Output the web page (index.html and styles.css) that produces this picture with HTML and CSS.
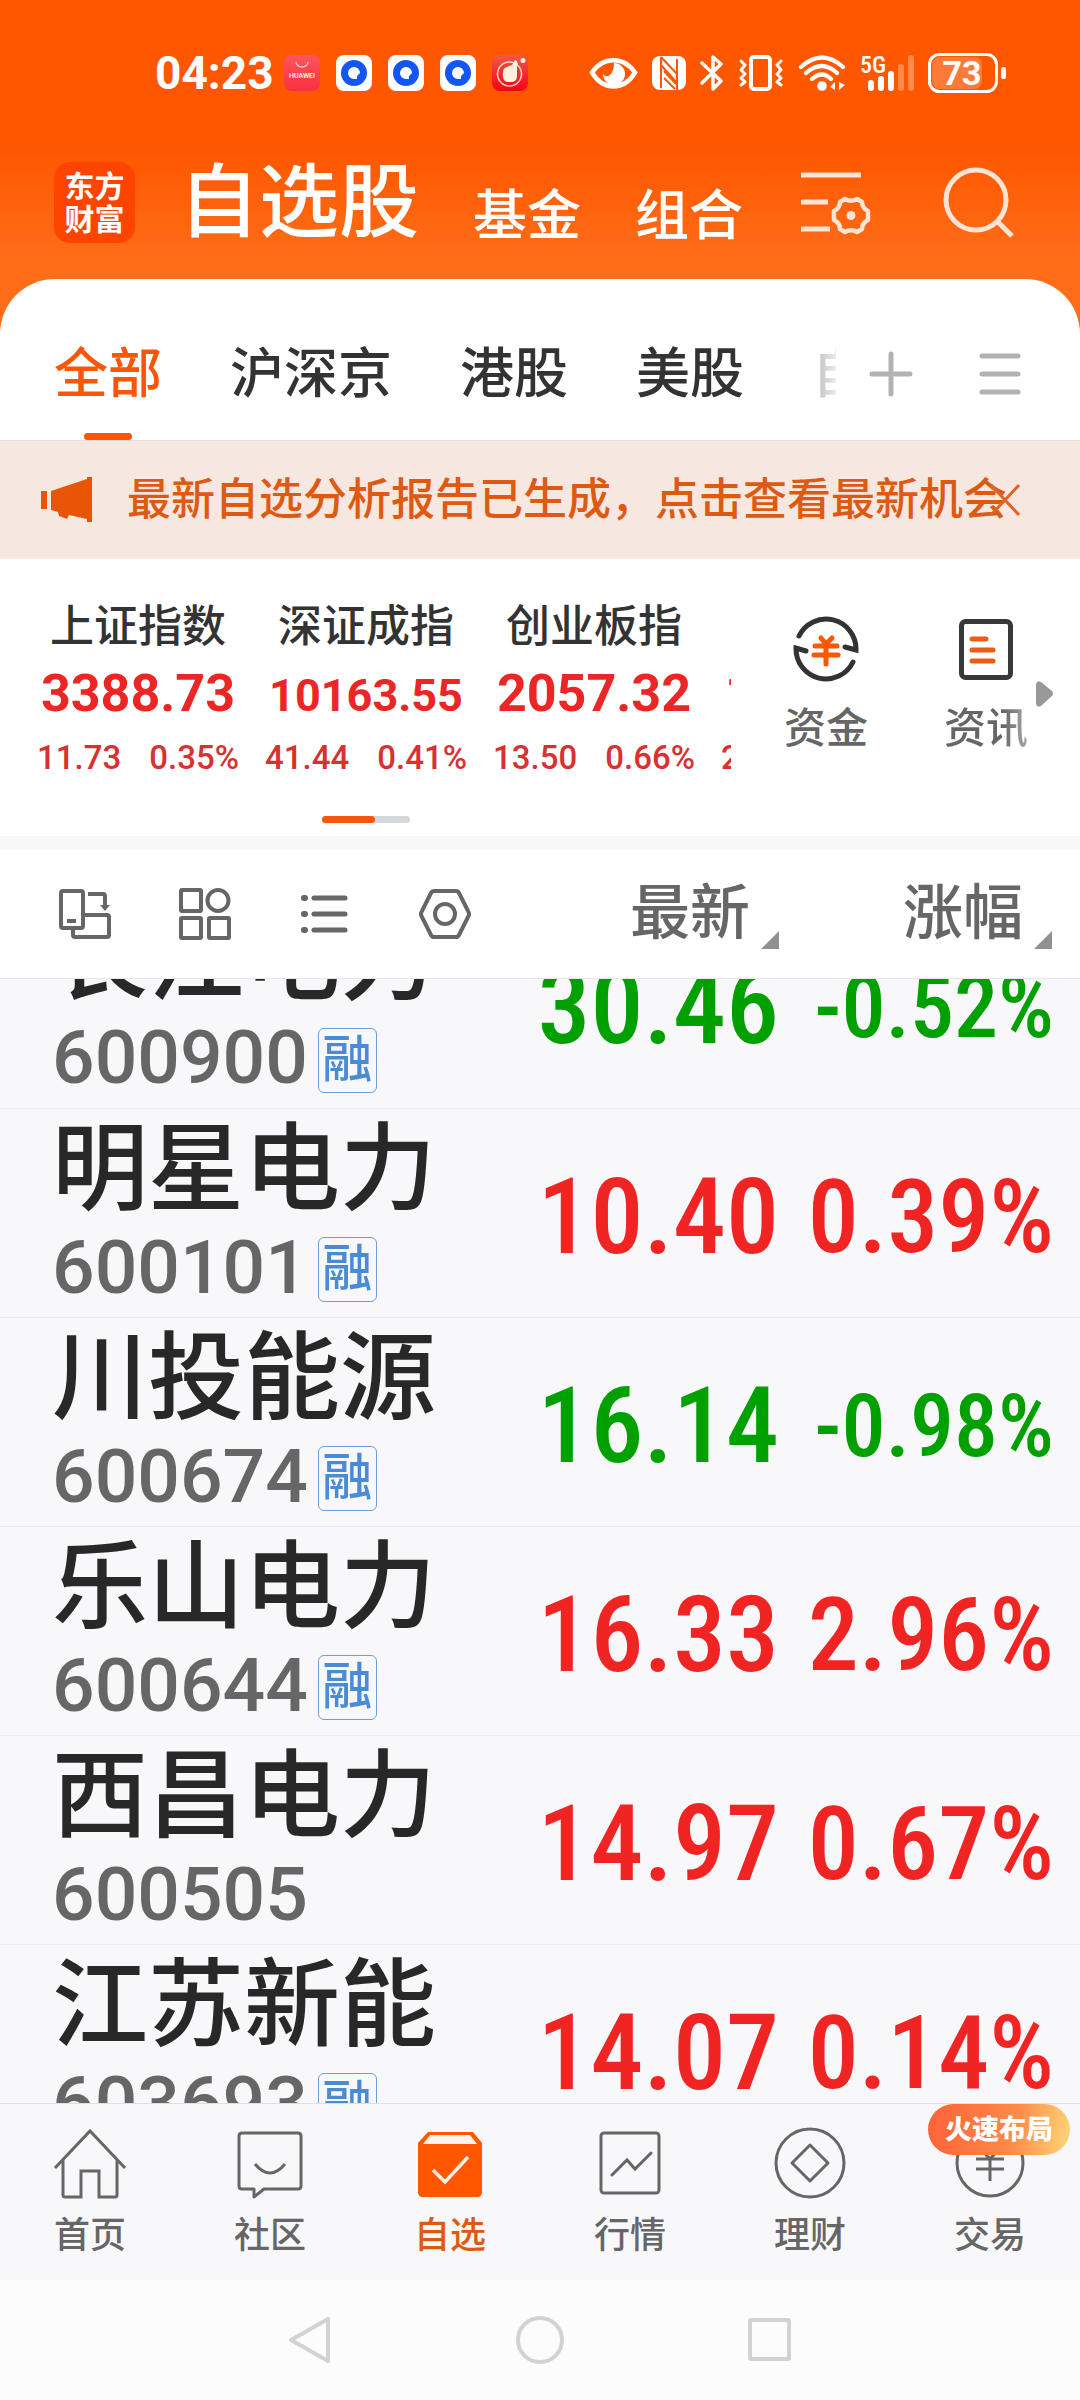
FILE: index.html
```
<!DOCTYPE html>
<html lang="zh-CN">
<head>
    <meta charset="UTF-8">
    <meta name="viewport" content="width=device-width, initial-scale=1.0">
    <title>自选股</title>
    <link rel="stylesheet" href="styles.css">
</head>
<body>
    <!-- Status bar -->
    <div class="status">
        <span class="time">04:23</span>
        <div class="notifications">
            <svg width="36" height="36" viewBox="0 0 36 36"><defs><linearGradient id="hw" x1="0" y1="0" x2="0" y2="1"><stop offset="0" stop-color="#ff5560"/><stop offset="1" stop-color="#f8303f"/></linearGradient></defs><rect width="36" height="36" rx="8" fill="url(#hw)"/><path d="M12 7a6 5 0 0 0 12 0" fill="none" stroke="#ffd0d0" stroke-width="1.3"/><text x="18" y="23" text-anchor="middle" font-size="7" class="tiny">HUAWEI</text></svg>
            <svg width="36" height="36" viewBox="0 0 36 36"><rect width="36" height="36" rx="8" fill="#fff"/><circle cx="18" cy="18" r="13" fill="#1456f5"/><path d="M18 12a6 6 0 1 0 0 12l3 0v-3l3-3a6 6 0 0 0-6-6z" fill="#fff"/></svg>
            <svg width="36" height="36" viewBox="0 0 36 36"><rect width="36" height="36" rx="8" fill="#fff"/><circle cx="18" cy="18" r="13" fill="#1456f5"/><path d="M18 12a6 6 0 1 0 0 12l3 0v-3l3-3a6 6 0 0 0-6-6z" fill="#fff"/></svg>
            <svg width="36" height="36" viewBox="0 0 36 36"><rect width="36" height="36" rx="8" fill="#fff"/><circle cx="18" cy="18" r="13" fill="#1456f5"/><path d="M18 12a6 6 0 1 0 0 12l3 0v-3l3-3a6 6 0 0 0-6-6z" fill="#fff"/></svg>
            <svg width="36" height="36" viewBox="0 0 36 36"><defs><linearGradient id="tb" x1="0" y1="0" x2="0" y2="1"><stop offset="0" stop-color="#ee5a48"/><stop offset="1" stop-color="#fb0014"/></linearGradient></defs><rect width="36" height="36" rx="8" fill="url(#tb)"/><circle cx="17.500" cy="19" r="12" fill="none" stroke="#ffd9c8" stroke-width="1.500"/><path d="M11 17q0-4 4-5l5-2 3-5q4 1 2 7v9q0 6-6 6h-4q-5-1-4-10z" fill="#fff0e2"/><circle cx="31" cy="5.500" r="2.500" fill="#ffe5dc"/></svg>
        </div>
        <div class="system">
            <svg width="49" height="36" viewBox="0 0 49 36"><path d="M3 17.500C14 1 35 1 46 17.500C35 36 14 36 3 17.500z" fill="none" stroke="#fff" stroke-width="4.500"/><path d="M25 8a11 11 0 1 1-11 11q3 4 7 1q4-4 4-12z" fill="#fff"/></svg>
            <svg width="34" height="36" viewBox="0 0 34 36"><rect x="0" y="1" width="34" height="34" rx="8" fill="#fff"/><path d="M9 2v31M25 4v31" stroke="#ff5600" stroke-width="2"/><path d="M9 2l16 17v9L9 10M12 23l11 11M12 16l12 13" stroke="#ff5600" stroke-width="2" fill="none"/></svg>
            <svg width="24" height="36" viewBox="0 0 24 36"><path d="M2 8l19 18-8 8V2l8 7L2 28" fill="none" stroke="#fff" stroke-width="3.500" stroke-linejoin="round" stroke-linecap="round"/></svg>
            <svg width="46" height="36" viewBox="0 0 46 36"><rect x="13" y="2" width="19" height="32" rx="3" fill="none" stroke="#fff" stroke-width="4"/><path d="M3 6l4 4-4 5 4 4-4 4 4 4-4 3M43 6l-4 4 4 5-4 4 4 4-4 4 4 3" fill="none" stroke="#fff" stroke-width="3" stroke-linecap="round" stroke-linejoin="round"/></svg>
            <svg width="48" height="36" viewBox="0 0 48 36"><g fill="none" stroke="#fff" stroke-width="4.200" stroke-linecap="round"><path d="M3 12q21-19 42 0M8 18q16-14 31 0M14 24q10-9 19 0"/></g><circle cx="24" cy="31" r="4.800" fill="#fff"/><path d="M37 27v8l-5-3zM41 27v8l6-5z" fill="#fff"/></svg>
            <svg width="54" height="38" viewBox="0 0 54 38"><text x="0" y="19" font-size="24" class="net">5G</text><g fill="#fff"><rect x="8" y="26" width="6" height="11" rx="3"/><rect x="18" y="22" width="6" height="15" rx="3"/><rect x="28" y="17" width="6" height="20" rx="3"/></g><g fill="#ff8a4c"><rect x="38" y="10" width="6" height="27" rx="3"/><rect x="48" y="1" width="6" height="36" rx="3"/></g></svg>
            <svg width="78" height="40" viewBox="0 0 78 40"><rect x="4" y="4" width="50" height="32" rx="8" fill="#ff7a38"/><rect x="1.500" y="1.500" width="67" height="37" rx="10" fill="none" stroke="#fff" stroke-width="3"/><rect x="73" y="14" width="5" height="12" rx="2" fill="#fff"/><text x="34" y="32" text-anchor="middle" font-size="34" class="level">73</text></svg>
        </div>
    </div>

    <header class="header">
        <div class="logo"><span>东方</span><span>财富</span></div>
        <nav class="sections">
            <a href="#" class="current">自选股</a>
            <a href="#">基金</a>
            <a href="#">组合</a>
        </nav>
        <button class="icon-btn" aria-label="设置">
            <svg width="70" height="64" viewBox="0 0 70 64" fill="none" stroke="#ffe3d3" stroke-width="5"><path d="M0 4h60M0 31h27M0 58h29"/><path d="M44 28q6 3.500 12 0l5 3q0 6 6 9v9q-6 3-6 9l-5 3q-6-3.500-12 0l-5-3q0-6-6-9v-9q6-3 6-9z" stroke-width="4.500" stroke-linejoin="round"/><circle cx="50" cy="44.500" r="4.500" fill="#ffe3d3" stroke="none"/></svg>
        </button>
        <button class="icon-btn search" aria-label="搜索">
            <svg width="72" height="72" viewBox="0 0 72 72" fill="none" stroke="#ffe3d3" stroke-width="5"><circle cx="33" cy="33" r="30"/><path d="M54 54l15 15"/></svg>
        </button>
    </header>

    <main class="sheet">
        <div class="groups">
            <div class="group-list">
                <button class="group active">全部</button>
                <button class="group">沪深京</button>
                <button class="group">港股</button>
                <button class="group">美股</button>
                <button class="group">自选</button>
            </div>
            <button class="icon-btn" aria-label="添加"><svg width="44" height="46" viewBox="0 0 44 46"><path d="M22 3v40M3 23h38" stroke="#b2b2b2" stroke-width="5" stroke-linecap="round"/></svg></button>
            <button class="icon-btn" aria-label="菜单"><svg width="42" height="46" viewBox="0 0 42 46"><path d="M3 5h36M3 23h36M3 41h36" stroke="#b2b2b2" stroke-width="5" stroke-linecap="round"/></svg></button>
        </div>

        <div class="notice">
            <svg width="52" height="46" viewBox="0 0 52 46"><path d="M0 14h6v18H0zM10 14l36-12V0h5v45h-5v-3l-18-4-2 4-8-3-1-4-7-2z" fill="#e95504"/></svg>
            <a href="#">最新自选分析报告已生成，点击查看最新机会</a>
            <button class="icon-btn close" aria-label="关闭"><svg width="32" height="34" viewBox="0 0 32 34"><path d="M2 2l28 30M30 2L2 32" stroke="#dd6524" stroke-width="3"/></svg></button>
        </div>

        <section class="market">
            <div class="indices">
                <div class="index"><span class="index-name">上证指数</span><b class="index-value">3388.73</b><span class="index-change"><span>11.73</span><span>0.35%</span></span></div>
                <div class="index"><span class="index-name">深证成指</span><b class="index-value long">10163.55</b><span class="index-change"><span>41.44</span><span>0.41%</span></span></div>
                <div class="index"><span class="index-name">创业板指</span><b class="index-value">2057.32</b><span class="index-change"><span>13.50</span><span>0.66%</span></span></div>
                <div class="index"><span class="index-name">科创50</span><b class="index-value">1006.32</b><span class="index-change"><span>2.50</span><span>0.25%</span></span></div>
            </div>
            <div class="shortcuts">
                <a href="#" class="shortcut">
                    <svg width="66" height="68" viewBox="0 0 66 68" fill="none" stroke="#333" stroke-width="5" stroke-linecap="round"><path d="M6 21A30 30 0 0 1 63 35L52 32M60 47A30 30 0 0 1 3 33L13 36"/><path d="M28 23l5 6 6-6M22 31h22M21 40h24M33 29v20" stroke="#ff5600"/></svg>
                    <span>资金</span>
                </a>
                <a href="#" class="shortcut">
                    <svg width="54" height="68" viewBox="0 0 54 68" fill="none" stroke="#383838" stroke-width="5" stroke-linecap="round"><rect x="2.500" y="6.500" width="49" height="56" rx="4"/><path d="M13 24h14M13 35h21M13 46h21" stroke="#eb5d14"/></svg>
                    <span class="fade">资讯</span>
                </a>
            </div>
            <svg class="more" width="18" height="28" viewBox="0 0 18 28"><path d="M0 4q1-4 5-2l11 9q2 3 0 5L5 26q-4 2-5-2z" fill="#999"/></svg>
            <div class="pager"><i></i></div>
        </section>

        <div class="toolbar">
            <div class="tools">
                <button class="icon-btn" aria-label="横屏"><svg width="52" height="52" viewBox="0 0 52 52" fill="none" stroke="#666" stroke-width="4"><rect x="2" y="3" width="22" height="37" rx="2"/><path d="M8 33h9M14 41v6q0 2 2 2h32q2 0 2-2V29q0-2-2-2H25M29 6h15q2 0 2 2v11"/><path d="M41 17h10l-5 6z" fill="#666" stroke="none"/></svg></button>
                <button class="icon-btn" aria-label="宫格"><svg width="52" height="52" viewBox="0 0 52 52" fill="none" stroke="#666" stroke-width="4"><rect x="2" y="2" width="20" height="21" rx="1"/><circle cx="39" cy="12.500" r="10.500"/><rect x="2" y="30" width="20" height="20" rx="1"/><rect x="30" y="30" width="20" height="20" rx="1"/></svg></button>
                <button class="icon-btn" aria-label="列表"><svg width="52" height="52" viewBox="0 0 52 52" stroke="#666" stroke-width="5" stroke-linecap="round"><path d="M15 10h31M15 26h31M15 42h31"/><path d="M5 10h1M5 26h1M5 42h1" stroke-width="6"/></svg></button>
                <button class="icon-btn" aria-label="更多设置"><svg width="52" height="52" viewBox="0 0 52 52" fill="none" stroke="#666" stroke-width="4"><path d="M15 3h22q2 0 3 2l9 18q2 3 0 6l-9 18q-1 2-3 2H15q-2 0-3-2L3 29q-2-3 0-6L12 5q1-2 3-2z"/><circle cx="26" cy="26" r="10"/></svg></button>
            </div>
            <button class="sort">最新<svg width="18" height="18" viewBox="0 0 18 18"><path d="M18 0v18H0z" fill="#8f8f94"/></svg></button>
            <button class="sort">涨幅<svg width="18" height="18" viewBox="0 0 18 18"><path d="M18 0v18H0z" fill="#8f8f94"/></svg></button>
        </div>

        <div class="scroller">
            <table class="stocks">
                <tr class="down">
                    <td class="stock"><div class="name">长江电力</div><div class="code">600900<span class="tag">融</span></div></td>
                    <td class="price">30.46</td>
                    <td class="percent">-0.52%</td>
                </tr>
                <tr class="up">
                    <td class="stock"><div class="name">明星电力</div><div class="code">600101<span class="tag">融</span></div></td>
                    <td class="price">10.40</td>
                    <td class="percent">0.39%</td>
                </tr>
                <tr class="down">
                    <td class="stock"><div class="name">川投能源</div><div class="code">600674<span class="tag">融</span></div></td>
                    <td class="price">16.14</td>
                    <td class="percent">-0.98%</td>
                </tr>
                <tr class="up">
                    <td class="stock"><div class="name">乐山电力</div><div class="code">600644<span class="tag">融</span></div></td>
                    <td class="price">16.33</td>
                    <td class="percent">2.96%</td>
                </tr>
                <tr class="up">
                    <td class="stock"><div class="name">西昌电力</div><div class="code">600505</div></td>
                    <td class="price">14.97</td>
                    <td class="percent">0.67%</td>
                </tr>
                <tr class="up">
                    <td class="stock"><div class="name">江苏新能</div><div class="code">603693<span class="tag">融</span></div></td>
                    <td class="price">14.07</td>
                    <td class="percent">0.14%</td>
                </tr>
            </table>
        </div>
    </main>

    <nav class="tabbar">
        <a href="#"><svg width="74" height="74" viewBox="0 0 74 74" fill="none" stroke="#666" stroke-width="3"><path d="M2 41L37 4l35 37M10 33v35q0 2 2 2h16V44h18v26h16q2 0 2-2V33"/></svg>首页</a>
        <a href="#"><svg width="74" height="74" viewBox="0 0 74 74" fill="none" stroke="#666" stroke-width="3"><path d="M9 6h56q3 0 3 3v50q0 3-3 3H31l-10 8v-8H9q-3 0-3-3V9q0-3 3-3z" stroke-linejoin="round"/><path d="M22 37q15 18 30 0"/></svg>社区</a>
        <a href="#" class="selected"><svg width="74" height="74" viewBox="0 0 74 74"><path d="M15 5h45l9 11v49q0 5-5 5H10q-5 0-5-5V16z" fill="#ff5600"/><path d="M17 8h40l7 9H10z" fill="#fff3ec"/><path d="M20 43l12 12 23-25" fill="none" stroke="#fff0e6" stroke-width="3.500"/></svg>自选</a>
        <a href="#"><svg width="74" height="74" viewBox="0 0 74 74" fill="none" stroke="#666" stroke-width="3"><rect x="8" y="6" width="58" height="60" rx="3"/><path d="M19 48l15-15 8 9 16-16" stroke-linecap="round"/></svg>行情</a>
        <a href="#"><svg width="74" height="74" viewBox="0 0 74 74" fill="none" stroke="#666" stroke-width="3"><circle cx="37" cy="36" r="34"/><path d="M37 18l18 18-18 18-18-18z" stroke-linejoin="round"/></svg>理财</a>
        <a href="#"><svg width="74" height="74" viewBox="0 0 74 74" fill="none" stroke="#666" stroke-width="3"><circle cx="37" cy="36" r="33"/><path d="M25 19l12 13 12-13M23 32h28M23 42h28M37 32v22"/></svg>交易<span class="promo">火速布局</span></a>
    </nav>

    <div class="system-nav">
        <svg width="46" height="50" viewBox="0 0 46 50"><path d="M41 4v42L4 25z"/></svg>
        <svg width="50" height="50" viewBox="0 0 50 50"><circle cx="25" cy="25" r="22"/></svg>
        <svg width="46" height="50" viewBox="0 0 46 50"><rect x="3" y="5" width="39" height="39" rx="1"/></svg>
    </div>
</body>
</html>
```

FILE: styles.css
```
* {
    box-sizing: border-box;
}
body {
    margin: 0;
    height: 100vh;
    display: flex;
    flex-direction: column;
    font-family: Roboto, "Noto Sans CJK SC", sans-serif;
    font-weight: 500;
    color: #333;
    background: linear-gradient(#ff5600 0, #ff5600 145px, #ff6d18 260px);
}
svg {
    display: block;
    flex: none;
}
a {
    color: inherit;
    text-decoration: none;
}
button {
    margin: 0;
    padding: 0;
    border: 0;
    background: none;
    color: inherit;
    font: inherit;
}
.icon-btn {
    flex: none;
}

/* status bar */
.status {
    height: 146px;
    padding: 0 74px 0 155px;
    display: flex;
    align-items: center;
    color: #fff;
}
.time {
    font-size: 46px;
    font-weight: 700;
}
.notifications {
    display: flex;
    gap: 16px;
    margin-left: 10px;
}
.system {
    display: flex;
    align-items: center;
    gap: 14px;
    margin-left: auto;
}
.tiny, .net, .level {
    fill: #fff;
    font-weight: 500;
}
.net {
    font-family: "Roboto Condensed", Roboto, sans-serif;
}
.level {
    font-weight: 700;
}

/* header */
.header {
    height: 133px;
    padding: 0 65px 20px 54px;
    display: flex;
    align-items: center;
    color: #fff;
}
.logo {
    width: 81px;
    height: 81px;
    border-radius: 16px;
    background: #ff4400;
    display: flex;
    flex-direction: column;
    align-items: center;
    justify-content: center;
    font-size: 30px;
    line-height: 33px;
    font-weight: 700;
}
.sections {
    flex: 1;
    display: flex;
    align-items: flex-end;
    gap: 54px;
    margin-left: 44px;
    font-size: 54px;
    line-height: 52px;
}
.sections .current {
    font-size: 80px;
    line-height: 80px;
}
.search {
    margin-left: 72px;
}

/* white sheet */
.sheet {
    flex: 1;
    min-height: 0;
    display: flex;
    flex-direction: column;
    background: #fff;
    border-radius: 55px 55px 0 0;
    overflow: hidden;
}
.groups {
    height: 161px;
    flex: none;
    padding: 28px 59px 0 54px;
    display: flex;
    align-items: center;
    gap: 66px;
}
.group-list {
    flex: 1;
    align-self: stretch;
    display: flex;
    gap: 68px;
    overflow: hidden;
    margin-right: -33px;
    -webkit-mask-image: linear-gradient(to right, #000 90%, transparent 101%);
    mask-image: linear-gradient(to right, #000 90%, transparent 101%);
}
.group {
    flex: none;
    padding-bottom: 8px;
    font-size: 54px;
    position: relative;
}
.group.active {
    color: #fb5607;
}
.group.active::after {
    content: "";
    position: absolute;
    left: 50%;
    bottom: 0;
    width: 48px;
    height: 7px;
    margin-left: -24px;
    border-radius: 4px;
    background: #fb5607;
}
.notice {
    height: 119px;
    flex: none;
    padding: 0 59px 0 41px;
    display: flex;
    align-items: center;
    background: #f6e7e0;
    border-top: 1px solid #e6e2e1;
    color: #de5a12;
    font-size: 44px;
    white-space: nowrap;
}
.notice a {
    flex: 1;
    min-width: 0;
    margin-left: 34px;
    padding-bottom: 8px;
}
.close {
    margin-left: -20px;
}

/* market indices */
.market {
    height: 291px;
    flex: none;
    display: flex;
    position: relative;
    border-bottom: 14px solid #f7f8fa;
}
.indices {
    flex: 1;
    min-width: 0;
    display: flex;
    overflow: hidden;
    margin-left: 24px;
    padding-top: 40px;
}
.index {
    width: 228px;
    flex: none;
    display: flex;
    flex-direction: column;
    align-items: center;
}
.index-name {
    font-size: 44px;
    line-height: 56px;
}
.index-value {
    height: 78px;
    font-size: 52px;
    line-height: 78px;
    color: #ec2525;
}
.index-value.long {
    font-size: 45px;
    line-height: 82px;
}
.index-change {
    width: 202px;
    display: flex;
    justify-content: space-between;
    font-size: 33px;
    line-height: 50px;
    color: #d93030;
}
.shortcuts {
    display: flex;
    width: 304px;
    margin-left: 45px;
    padding: 56px 52px 0 8px;
    justify-content: space-between;
}
.shortcut {
    display: flex;
    flex-direction: column;
    align-items: center;
    gap: 16px;
    font-size: 42px;
    line-height: 60px;
    color: #666;
}
.fade {
    background: linear-gradient(to right, #666 70%, #aaa);
    -webkit-background-clip: text;
    background-clip: text;
    color: transparent;
}
.more {
    position: absolute;
    right: 26px;
    top: 121px;
}
.pager {
    position: absolute;
    left: 322px;
    bottom: 13px;
    width: 88px;
    height: 7px;
    border-radius: 4px;
    background: #d5d8dc;
}
.pager i {
    display: block;
    width: 60%;
    height: 7px;
    border-radius: 4px;
    background: #fb5607;
}

/* toolbar above the list */
.toolbar {
    height: 129px;
    flex: none;
    display: flex;
    align-items: center;
    padding-right: 28px;
    border-bottom: 1px solid #e8e8ea;
    color: #666;
}
.tools {
    flex: 1;
    display: flex;
    gap: 68px;
    padding-left: 59px;
}
.sort {
    width: 273px;
    display: flex;
    align-items: flex-end;
    justify-content: flex-end;
    gap: 11px;
    font-size: 60px;
    line-height: 70px;
}

/* stock list, scrolled part way */
.scroller {
    flex: 1;
    min-height: 0;
    overflow: hidden;
    background: #f8f8fa;
}
.stocks {
    width: 100%;
    margin-top: -80px;
    border-collapse: collapse;
}
.stocks td {
    height: 209px;
    padding: 0;
    border-bottom: 1px solid #ebebed;
}
.stocks .stock {
    padding-left: 52px;
}
.name {
    font-size: 96px;
    line-height: 108px;
    color: #282828;
}
.code {
    display: flex;
    align-items: center;
    gap: 10px;
    height: 88px;
    font-size: 75px;
    line-height: 90px;
    color: #666;
}
.tag {
    width: 59px;
    height: 65px;
    margin-top: 6px;
    border: 1px solid #6b9fd6;
    border-radius: 6px;
    font-size: 50px;
    line-height: 62px;
    text-align: center;
    color: #4a8bd6;
}
.stocks .price, .stocks .percent {
    padding-top: 8px;
    font-family: "Roboto Condensed", Roboto, sans-serif;
    line-height: 120px;
    text-align: right;
    white-space: nowrap;
}
.price {
    font-size: 106px;
}
.percent {
    width: 301px;
    font-size: 102px;
}
.stocks .percent {
    padding-right: 26px;
}
.down .percent {
    font-size: 88px;
}
.up {
    color: #f12424;
}
.down {
    color: #00a000;
}

/* bottom tabs */
.tabbar {
    height: 177px;
    flex: none;
    display: flex;
    background: #f8f8fa;
    border-top: 1px solid #dfdfe1;
}
.tabbar a {
    flex: 1;
    position: relative;
    display: flex;
    flex-direction: column;
    align-items: center;
    padding-top: 23px;
    gap: 10px;
    font-size: 36px;
    line-height: 50px;
    color: #666;
}
.tabbar .selected {
    color: #de5a12;
}
.tabbar .promo {
    position: absolute;
    top: 0;
    right: 10px;
    width: 142px;
    height: 51px;
    border-radius: 26px;
    background: linear-gradient(100deg, #ff6238, #ff8a48 60%, #ffd878);
    color: #fff;
    font-size: 27px;
    line-height: 53px;
    font-weight: 900;
    text-align: center;
}
.system-nav {
    height: 120px;
    flex: none;
    display: flex;
    align-items: center;
    justify-content: center;
    gap: 182px;
    background: #fcfcfc;
}
.system-nav svg {
    fill: none;
    stroke: #d2d2d2;
    stroke-width: 4;
    stroke-linejoin: round;
}
```
